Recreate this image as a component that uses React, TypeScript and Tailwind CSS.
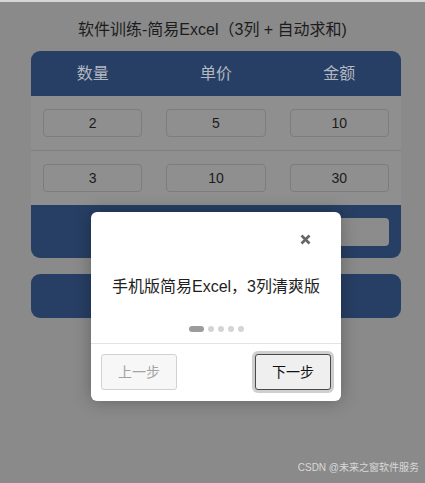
import { useState } from "react";

const rows = [
  { qty: "2", price: "5", amount: "10" },
  { qty: "3", price: "10", amount: "30" },
];

const font = { fontFamily: '"Liberation Sans", "Noto Sans CJK SC", sans-serif' };

function Cell({ value }: { value: string }) {
  return (
    <div className="flex items-center justify-center px-3">
      <input
        readOnly
        value={value}
        className="h-[28px] w-full rounded-[4px] border border-[#7d7d7d] bg-[#8f8f8f] text-center text-[14px] text-[#1c1c1c] outline-none"
      />
    </div>
  );
}

export default function App() {
  const [step, setStep] = useState(0);

  return (
    <div
      className="relative h-[483px] w-full overflow-hidden border-t-2 border-[#d6d6d6] bg-[#8a8a8a]"
      style={font}
    >
      <div className="pt-[16px]">
        <h1 className="text-center text-[16px] leading-[24px] text-[#1c1c1c]">
          软件训练-简易Excel（3列 + 自动求和)
        </h1>

        {/* Table */}
        <div className="ml-[31px] mt-[9px] w-[370px] overflow-hidden rounded-[9px]">
          <div className="grid h-[45px] grid-cols-3 items-center bg-[#273f64] text-center text-[16px] text-[#b3b8c1]">
            <div>数量</div>
            <div>单价</div>
            <div>金额</div>
          </div>
          {rows.map((r, i) => (
            <div
              key={i}
              className={`grid grid-cols-3 bg-[#8f8f8f] ${i === 0 ? "h-[55px] border-b border-[#7f7f7f] pb-[1px]" : "h-[54px] pb-[1px]"}`}
            >
              <Cell value={r.qty} />
              <Cell value={r.price} />
              <Cell value={r.amount} />
            </div>
          ))}
          <div className="grid h-[53px] grid-cols-3 bg-[#273f64]">
            <div />
            <div className="flex items-center justify-center text-[16px] text-[#b3b8c1]">合计</div>
            <div className="flex items-center justify-center px-3">
              <div className="h-[28px] w-full rounded-[4px] bg-[#8c8c8c]" />
            </div>
          </div>
        </div>

        <button className="ml-[31px] mt-[16px] flex h-[44px] w-[370px] items-center justify-center rounded-[9px] bg-[#273f64] text-[16px] text-[#b3b8c1]">
          计算合计
        </button>
      </div>

      {/* Guide modal */}
      <div className="absolute left-[91px] top-[210px] flex w-[250px] flex-col rounded-[6px] bg-white shadow-[0_0_18px_rgba(0,0,0,0.28)]">
        <div className="flex h-[54px] items-center justify-end pr-[30px]">
          <svg width="11" height="11" viewBox="0 0 11 11">
            <path d="M1.5 1.5L9.5 9.5M9.5 1.5L1.5 9.5" stroke="#666" strokeWidth="2.6" strokeLinecap="butt" />
          </svg>
        </div>
        <p className="mt-[9px] text-center text-[16px] leading-[24px] text-[#1e1e1e]">
          手机版简易Excel，3列清爽版
        </p>
        <div className="mt-[27px] flex h-[6px] items-center justify-center gap-[4px]">
          {[0, 1, 2, 3, 4].map((d) => (
            <span
              key={d}
              className={
                d === step
                  ? "h-[6px] w-[15px] rounded-full bg-[#9c9c9c]"
                  : "h-[6px] w-[6px] rounded-full bg-[#d4d4d4]"
              }
            />
          ))}
        </div>
        <div className="mt-[11px] border-t border-[#e3e3e3]" />
        <div className="flex items-center justify-between px-[10px] pb-[11px] pt-[10px]">
          <button
            disabled
            className="h-[36px] w-[76px] rounded-[3px] border border-[#d2d2d2] bg-[#f7f7f7] text-[14px] text-[#a3a3a3]"
          >
            上一步
          </button>
          <button
            onClick={() => setStep((s) => (s + 1) % 5)}
            className="h-[36px] w-[76px] rounded-[3px] border border-[#4a4a4a] bg-[#efefef] text-[14px] text-[#111] ring-[3px] ring-[#cfcfcf]"
          >
            下一步
          </button>
        </div>
      </div>

      <div className="absolute bottom-[8px] right-[6px] text-[10px] text-[#d9d9d9]">
        CSDN @未来之窗软件服务
      </div>
    </div>
  );
}
